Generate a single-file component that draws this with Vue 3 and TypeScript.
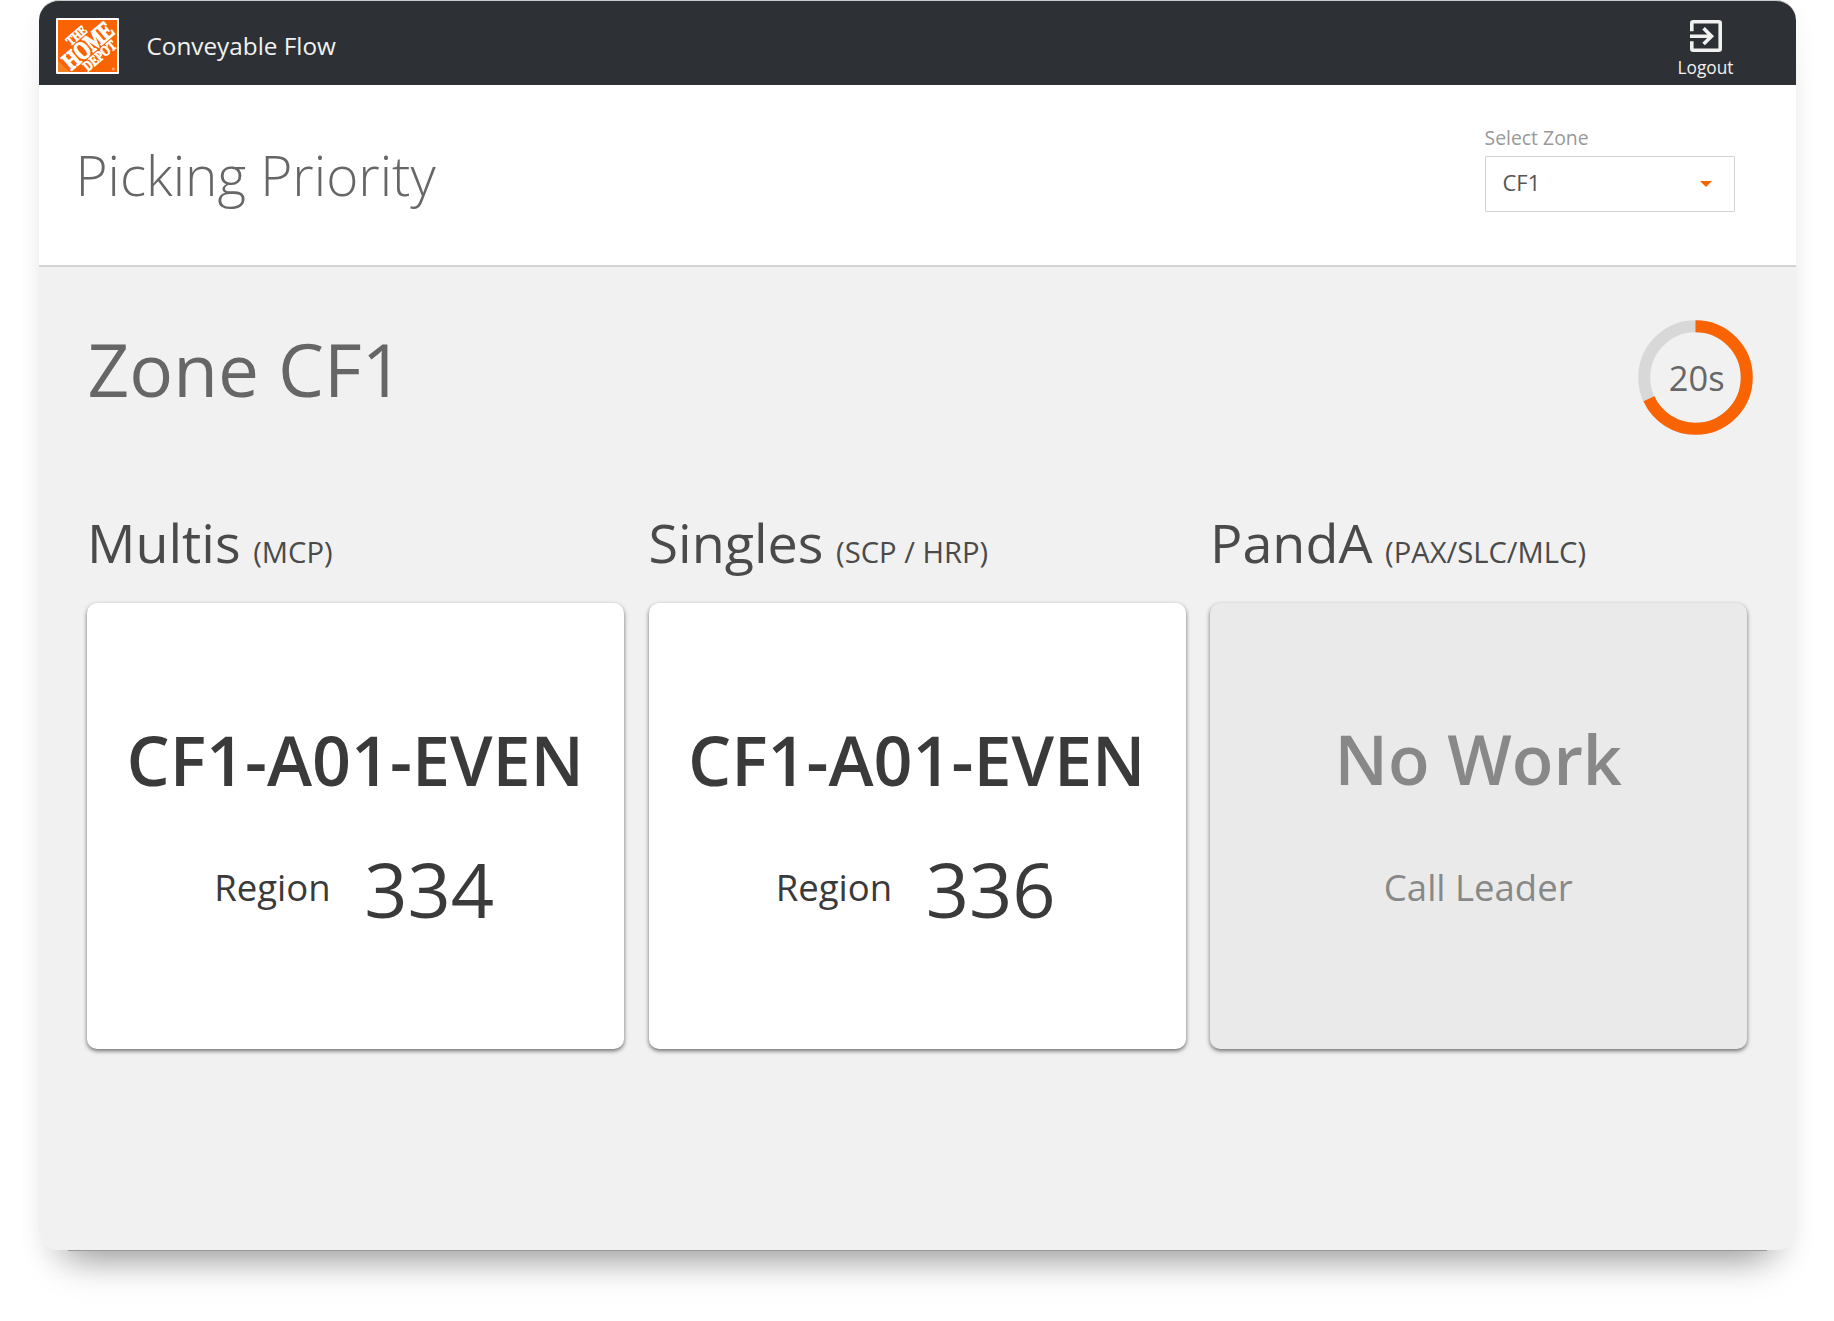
<script setup lang="ts">
import { ref } from 'vue'

interface Lane {
  name: string
  detail: string
  headline: string
  region?: string
  note?: string
}

const zone = ref('CF1')
const seconds = ref(20)

const lanes: Lane[] = [
  { name: 'Multis', detail: '(MCP)', headline: 'CF1-A01-EVEN', region: '334' },
  { name: 'Singles', detail: '(SCP / HRP)', headline: 'CF1-A01-EVEN', region: '336' },
  { name: 'PandA', detail: '(PAX/SLC/MLC)', headline: 'No Work', note: 'Call Leader' },
]

const circumference = 2 * Math.PI * 51.25
const elapsed = (circumference * 245) / 360
</script>

<template>
  <div class="page">
    <div class="window">
      <header class="bar">
        <svg class="logo" width="63" height="56" viewBox="0 0 63 56">
          <rect width="63" height="56" rx="1" fill="#fff" />
          <rect x="2" y="2" width="59" height="52" fill="#f96302" />
          <path d="M2 43L14 54H2Z" fill="#f58220" />
          <g class="logo-text" transform="translate(31.5 28) rotate(-40.5)" fill="#fff" stroke="#fff">
            <text x="-12.8" y="-10.7" font-size="13.4" textLength="22.5" lengthAdjust="spacingAndGlyphs" stroke-width=".8">THE</text>
            <text x="-28.6" y="8.3" font-size="25.4" textLength="58.5" lengthAdjust="spacingAndGlyphs" stroke-width="1.3">HOME</text>
            <text x="-16.3" y="20" font-size="14.4" textLength="38.5" lengthAdjust="spacingAndGlyphs" stroke-width=".8">DEPOT</text>
          </g>
          <circle cx="57.3" cy="51" r="1.1" fill="none" stroke="#fff" stroke-width=".6" opacity=".8" />
        </svg>
        <span class="app-name">Conveyable Flow</span>
        <button class="logout">
          <svg width="32" height="32" viewBox="0 0 32 32" fill="none" stroke="#f1f1f1" stroke-width="3.6">
            <path d="M1.8 11.2V3.3Q1.8 1.8 3.3 1.8H28.7Q30.2 1.8 30.2 3.3V28.7Q30.2 30.2 28.7 30.2H3.3Q1.8 30.2 1.8 28.7V21.2" />
            <path d="M0 16.2H21M13.6 8.3L21.5 16.2L13.6 24.1" />
          </svg>
          <span>Logout</span>
        </button>
      </header>

      <section class="page-head">
        <h1>Picking Priority</h1>
        <div class="field">
          <label>Select Zone</label>
          <div class="select">
            <span>{{ zone }}</span>
            <svg width="12" height="6" viewBox="0 0 12 6"><path d="M0 0H12L6 6Z" fill="#f96302" /></svg>
          </div>
        </div>
      </section>

      <main>
        <div class="zone-row">
          <h2>Zone {{ zone }}</h2>
          <div class="timer">
            <svg width="115" height="115" viewBox="0 0 115 115" fill="none" stroke-width="12">
              <circle cx="57.5" cy="57.5" r="51.25" stroke="#d8d8d8" />
              <circle
                cx="57.5" cy="57.5" r="51.25" stroke="#f96302"
                :stroke-dasharray="`${elapsed} ${circumference}`"
                transform="rotate(-90 57.5 57.5)"
              />
            </svg>
            <span>{{ seconds }}s</span>
          </div>
        </div>

        <div class="lanes">
          <section v-for="lane in lanes" :key="lane.name" class="lane">
            <h3><span class="name">{{ lane.name }}</span><span class="detail">{{ lane.detail }}</span></h3>
            <div class="card" :class="{ idle: !lane.region }">
              <div class="headline">{{ lane.headline }}</div>
              <div v-if="lane.region" class="region">
                <span class="label">Region</span><span class="number">{{ lane.region }}</span>
              </div>
              <div v-else class="note">{{ lane.note }}</div>
            </div>
          </section>
        </div>
      </main>
      <div class="base"></div>
    </div>
  </div>
</template>

<style>
body {
  background: #fff;
}
</style>

<style scoped>
.page {
  height: 1321px;
  overflow: hidden;
  background: #fff;
}

.window {
  width: 1757px;
  height: 1250px;
  margin-left: 38.5px;
  font-family: 'Open Sans', 'Noto Sans', sans-serif;
  border-radius: 20px;
  box-shadow:
    0 36px 36px -28px rgba(0, 0, 0, 0.4),
    0 12px 26px rgba(0, 0, 0, 0.05);
}

h1,
h2,
h3 {
  margin: 0;
  font-weight: 400;
  white-space: nowrap;
}

.bar {
  box-sizing: border-box;
  height: 84.5px;
  display: flex;
  align-items: center;
  padding: 5.5px 62px 0 17.5px;
  background: #2d3135;
  border-top: 1px solid #c9cccc;
  border-radius: 20px 20px 0 0;
}

.logo {
  flex: none;
}

.logo-text {
  font-family: 'Liberation Serif', serif;
  font-weight: 700;
}

.app-name {
  margin-left: 27.5px;
  font-size: 24.3px;
  line-height: 34px;
  color: #f1f1f1;
}

.logout {
  margin: 8px 0 0 auto;
  padding: 0;
  border: 0;
  background: none;
  color: #f1f1f1;
  font: 17.3px/24px 'Open Sans', sans-serif;
  display: flex;
  flex-direction: column;
  align-items: center;
  gap: 4px;
}

.page-head {
  box-sizing: border-box;
  height: 182px;
  display: flex;
  justify-content: space-between;
  align-items: flex-start;
  padding: 41px 61px 0 37px;
  background: #fff;
  border-bottom: 2px solid #d3d3d3;
}

h1 {
  font-size: 54.9px;
  font-weight: 300;
  line-height: 97px;
  color: #666;
}

.field {
  width: 250px;
}

.field label {
  display: block;
  font-size: 19.4px;
  line-height: 24px;
  color: #999;
}

.select {
  box-sizing: border-box;
  height: 56px;
  margin-top: 6.5px;
  padding: 0 22px 0 17px;
  display: flex;
  justify-content: space-between;
  align-items: center;
  border: 1.5px solid #d3d3d3;
  border-radius: 1px;
  font-size: 22px;
  color: #555;
}

.select span {
  padding-bottom: 5px;
}

main {
  box-sizing: border-box;
  height: 983.5px;
  padding: 53.5px 48.5px 0 48.5px;
  background: #f1f1f1;
  border-radius: 0 0 20px 20px;
}

.zone-row {
  display: flex;
  justify-content: space-between;
  height: 203px;
}

h2 {
  margin-left: 0.6px;
  font-size: 73px;
  line-height: 98px;
  color: #666;
}

.timer {
  width: 115px;
  height: 115px;
  display: grid;
  place-items: center;
  margin-right: -5.7px;
}

.timer > * {
  grid-area: 1 / 1;
}

.timer span {
  margin-left: 3px;
  font-size: 34.4px;
  line-height: 40px;
  color: #666;
}

.lanes {
  display: grid;
  grid-template-columns: repeat(3, 537px);
  justify-content: space-between;
}

.lane h3 {
  height: 80px;
  line-height: 39px;
  color: #4a4a4a;
}

.name {
  font-size: 53.9px;
}

.detail {
  margin-left: 12.6px;
  font-size: 29.2px;
}

.card {
  box-sizing: border-box;
  height: 445.5px;
  padding: 108px 0.5px 0 0;
  border-radius: 10px;
  background: #fff;
  box-shadow: 0 2px 4px rgba(0, 0, 0, 0.55);
  text-align: center;
  white-space: nowrap;
  color: #3a3a3a;
}

.card.idle {
  padding-top: 107px;
  background: #eaeaea;
  color: #888;
}

.headline {
  font-size: 68.2px;
  font-weight: 600;
  line-height: 98px;
}

.region {
  height: 100px;
  margin: 33px 2px 0 0;
  display: flex;
  justify-content: center;
}

.label,
.note {
  font-size: 36.5px;
}

.label {
  line-height: 90px;
}

.number {
  margin-left: 33.5px;
  font-size: 75.8px;
  line-height: 93px;
}

.note {
  margin-top: 34px;
  line-height: 90px;
}

.base {
  height: 1px;
  margin: 0 29px;
  background: #999;
}
</style>
